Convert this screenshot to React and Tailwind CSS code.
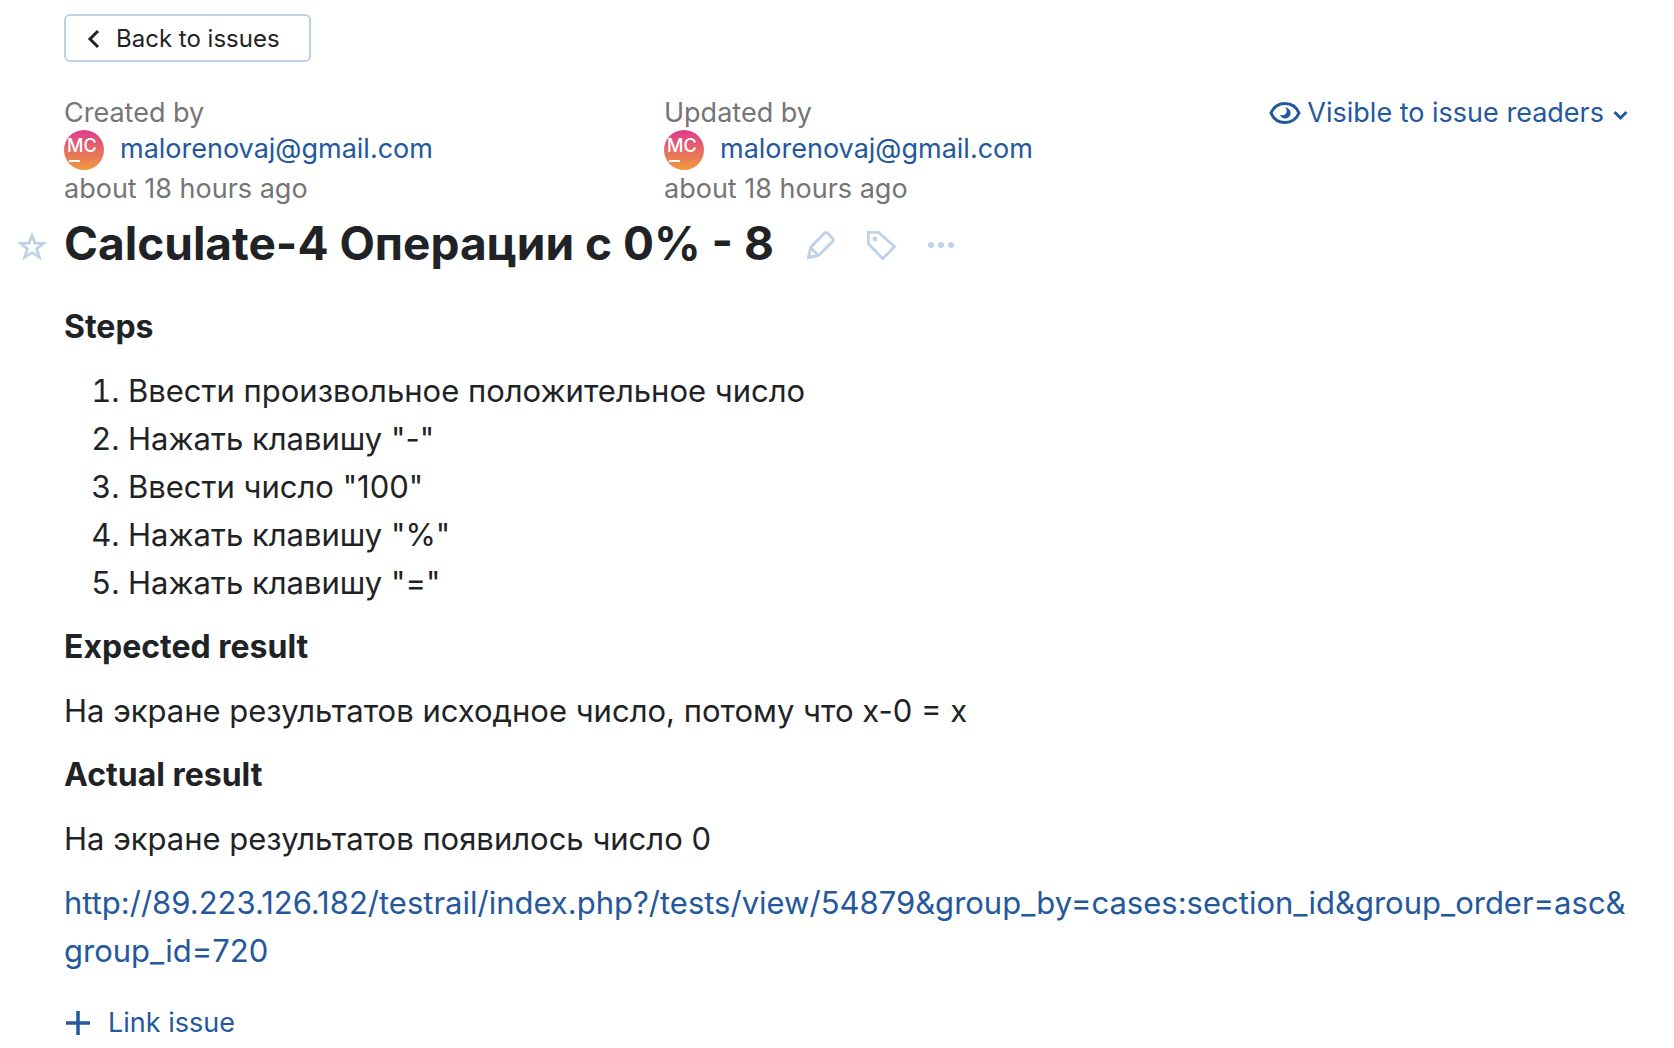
import React from "react";

const STEPS = [
  "Ввести произвольное положительное число",
  'Нажать клавишу "-"',
  'Ввести число "100"',
  'Нажать клавишу "%"',
  'Нажать клавишу "="',
];

function Person({ action, id }) {
  return (
    <div className="w-[600px] text-[27px] text-[#737577]">
      <div className="leading-[34px]">{action}</div>
      <div className="flex items-center gap-4 leading-10">
        <svg className="size-10 shrink-0" viewBox="0 0 40 40" aria-hidden="true">
          <defs>
            <linearGradient id={id} x1="0" y1="0" x2="0" y2="1">
              <stop offset="0" stopColor="#db3b8e" />
              <stop offset="1" stopColor="#f19a3c" />
            </linearGradient>
          </defs>
          <circle cx="20" cy="20" r="20" fill={`url(#${id})`} />
          <text x="3" y="22" fontSize="18" fontWeight="500" fill="#fff">MC</text>
          <rect x="5" y="30" width="11" height="2" fill="#fff" />
        </svg>
        <a href="#profile" className="-mt-0.5 text-[#24589c]">malorenovaj@gmail.com</a>
      </div>
      <div className="leading-[38px]">about 18 hours ago</div>
    </div>
  );
}

function Title() {
  return (
    <div className="mt-[5px] flex items-center pl-4">
      <button aria-label="Star issue" className="mt-1.5 mr-4 text-[#bed2e7]">
        <svg className="size-8" viewBox="0 0 32 32" fill="currentColor">
          <path
            fillRule="evenodd"
            d="M16 1.500 19.800 11.800 31 12.200 22.300 19.200 25.800 30.500 16 24.300 6.200 30.500 9.700 19.200 1 12.200 12.200 11.800ZM16 9.300 14.200 14.500 8.500 14.800 13 18.300 11.200 24.200 16 20.900 20.800 24.200 19 18.300 23.500 14.800 17.800 14.500Z"
          />
        </svg>
      </button>
      <h1 className="text-[46px] leading-[60px] font-bold">Calculate-4 Операции с 0% - 8</h1>
      <div className="mt-1 ml-[31px] flex gap-7 text-[#bed2e7]">
        <button aria-label="Edit issue">
          <svg className="size-8" viewBox="0 0 32 32" fill="none" stroke="currentColor" strokeWidth="2.800">
            <path d="M5.500 18.500 20 3.800 Q21 3 22 3.800 L28 9.800 Q28.800 11 28 12 L13.500 26.500 3.800 28.300Z" />
            <path d="M5.500 18.500 13.500 26.500" />
            <path d="M2 30 3 23 9 29Z" fill="currentColor" stroke="none" />
          </svg>
        </button>
        <button aria-label="Tag issue">
          <svg className="size-8" viewBox="0 0 32 32" fill="none" stroke="currentColor" strokeWidth="2.800">
            <path d="M3.400 3.400H13.500L29.500 17.500 17.800 29.800 3.400 14.800Z" />
            <circle cx="10" cy="10" r="2.400" fill="currentColor" stroke="none" />
          </svg>
        </button>
        <button aria-label="More actions">
          <svg className="size-8" viewBox="0 0 32 32" fill="currentColor">
            <circle cx="6" cy="16" r="3" />
            <circle cx="16" cy="16" r="3" />
            <circle cx="26" cy="16" r="3" />
          </svg>
        </button>
      </div>
    </div>
  );
}

export default function App() {
  return (
    <main className="min-h-screen bg-white pt-3.5 pb-1 font-['Inter',sans-serif] text-[#1f2326]">
      <div className="pl-16">
        <button className="flex h-12 items-center gap-3.5 rounded-md border-2 border-[#bdd0e5] pt-0.5 pr-[29px] pl-5 text-2xl">
          <svg className="h-5 w-4" viewBox="0 0 16 20" fill="none" stroke="currentColor" strokeWidth="3">
            <path d="M12 2 4 10 12 18" />
          </svg>
          Back to issues
        </button>
      </div>
      <header className="flex items-start pt-[34px] pr-[46px] pl-16">
        <Person action="Created by" id="avatar-created" />
        <Person action="Updated by" id="avatar-updated" />
        <button className="ml-auto flex items-center text-[27px] leading-[34px] whitespace-nowrap text-[#24589c]">
          <svg className="mr-1.5 size-8" viewBox="0 0 32 32" aria-hidden="true">
            <path d="M2 16C5 9 10 6.500 16 6.500S27 9 30 16C27 23 22 25.500 16 25.500S5 23 2 16Z" fill="none" stroke="currentColor" strokeWidth="3" strokeLinejoin="round" />
            <path d="M16 10.500A5.500 5.500 0 1 1 10.800 17.500 4 4 0 0 0 16 10.500Z" fill="currentColor" />
          </svg>
          Visible to issue readers
          <svg className="mt-1 ml-2 size-4" viewBox="0 0 16 16" fill="none" stroke="currentColor" strokeWidth="3" aria-hidden="true">
            <path d="M2.500 5 8.500 11 14.500 5" />
          </svg>
        </button>
      </header>
      <Title />
      <article className="flex flex-col gap-4 pt-[30px] pr-11 pl-16 text-[31px] leading-[48px]">
        <h2 className="text-[32px] leading-[48px] font-bold">Steps</h2>
        <ol className="list-decimal pl-16">
          {STEPS.map((step) => (
            <li key={step}>{step}</li>
          ))}
        </ol>
        <h2 className="text-[32px] leading-[48px] font-bold">Expected result</h2>
        <p>На экране результатов исходное число, потому что x-0 = x</p>
        <h2 className="text-[32px] leading-[48px] font-bold">Actual result</h2>
        <p>На экране результатов появилось число 0</p>
        <p>
          <a href="http://89.223.126.182/testrail/index.php?/tests/view/54879&group_by=cases:section_id&group_order=asc&group_id=720" className="text-[#24589c]">
            http://89.223.126.182/testrail/index.php?/tests/view/54879&amp;group_by=cases:section_id&amp;group_order=asc&amp;<wbr />group_id=720
          </a>
        </p>
      </article>
      <div className="pt-7 pl-16">
        <button className="flex items-center gap-4 text-[27px] leading-10 text-[#24589c]">
          <svg className="size-7" viewBox="0 0 28 28" fill="none" stroke="currentColor" strokeWidth="3.500" aria-hidden="true">
            <path d="M14 2V26M2 14H26" />
          </svg>
          Link issue
        </button>
      </div>
    </main>
  );
}
